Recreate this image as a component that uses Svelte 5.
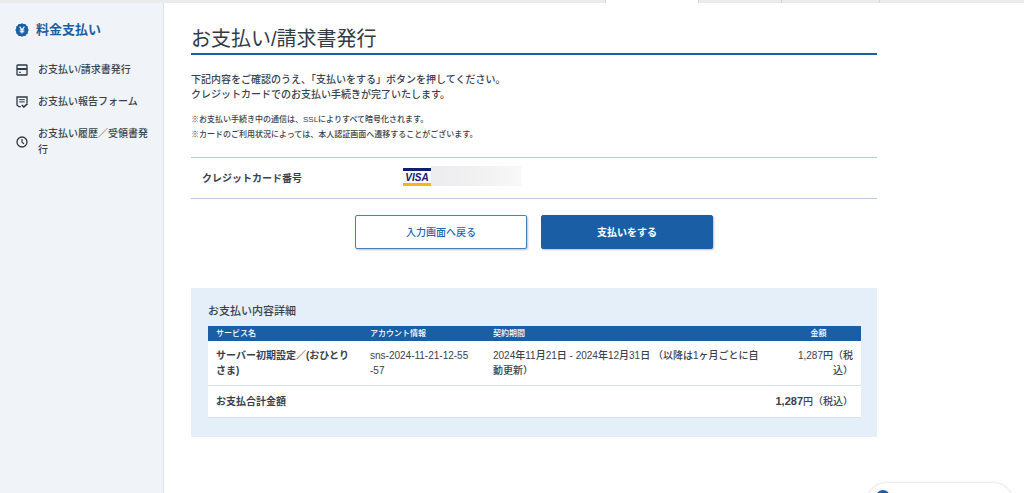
<script>
    const menus = [
        { icon: 'card', label: 'お支払い/請求書発行' },
        { icon: 'report', label: 'お支払い報告フォーム' },
        { icon: 'clock', label: 'お支払い履歴／受領書発行' },
    ];
    const notes = [
        '※お支払い手続き中の通信は、SSLによりすべて暗号化されます。',
        '※カードのご利用状況によっては、本人認証画面へ遷移することがございます。',
    ];
</script>

<div class="topbar">
    <span class="tab wide"></span>
    <span class="tab active"></span>
    <span class="tab"></span>
    <span class="tab mid"></span>
    <span class="tab last"></span>
</div>

<div class="layout">
    <nav class="sidebar">
        <h2>
            <svg width="14" height="14" viewBox="0 0 14 14">
                <path
                    d="M7 .3l1.600.7 1.800 0 .9 1.500 1.500.9V5.200l.9 1.800-.9 1.700v1.800l-1.500.900-.9 1.500-1.800 0L7 13.700l-1.600-.7-1.800 0-.9-1.500-1.500-.9V8.700L.3 7l.9-1.800V3.400l1.500-.9.9-1.500 1.800 0z"
                    fill="#1a5fa5"
                />
                <path d="M4.600 3.700L7 6.800l2.400-3.100M7 6.800v3.700M4.700 7h4.600M4.700 8.800h4.600" stroke="#fff" stroke-width="1.100" fill="none" />
            </svg>
            料金支払い
        </h2>
        <ul>
            {#each menus as menu}
                <li>
                    <a href="#{menu.icon}">
                        <svg width="12" height="12" viewBox="0 0 12 12" fill="none" stroke="#2f3740" stroke-width="1.3">
                            {#if menu.icon == 'card'}
                                <rect x="1" y="1" width="10" height="10" rx=".6" />
                                <path d="M1 5h10" stroke-width="2" />
                                <path d="M3 8.300h2" stroke-width="1" />
                            {:else if menu.icon == 'report'}
                                <path d="M4.800 10.700H2.800L1 8.900V1h10V7" />
                                <path d="M3.200 3.700h5.600M3.200 5.900h5.600" stroke-width="1" />
                                <path d="M5.800 9l2 2 3.700-3.500" stroke-width="1.600" />
                            {:else}
                                <circle cx="6" cy="6" r="5" />
                                <path d="M6 3v3.200l2 1.700" stroke-width="1.200" />
                            {/if}
                        </svg>
                        <span>{menu.label}</span>
                    </a>
                </li>
            {/each}
        </ul>
    </nav>

    <main>
        <h1>お支払い/請求書発行</h1>
        <p class="lead">
            下記内容をご確認のうえ、「支払いをする」ボタンを押してください。<br />
            クレジットカードでのお支払い手続きが完了いたします。
        </p>
        <div class="notes">
            {#each notes as note}
                <p>{note}</p>
            {/each}
        </div>

        <dl class="card-row">
            <dt>クレジットカード番号</dt>
            <dd>
                <svg width="28" height="18" viewBox="0 0 28 18">
                    <rect width="28" height="18" fill="#fff" />
                    <rect width="28" height="3" fill="#10206f" />
                    <rect y="15" width="28" height="3" fill="#f7b416" />
                    <text x="14" y="13" text-anchor="middle">VISA</text>
                </svg>
                <span class="masked"></span>
            </dd>
        </dl>

        <div class="buttons">
            <button type="button" class="back">入力画面へ戻る</button>
            <button type="submit" class="pay">支払いをする</button>
        </div>

        <section class="detail">
            <h3>お支払い内容詳細</h3>
            <table>
                <colgroup>
                    <col class="c-name" />
                    <col class="c-account" />
                    <col />
                    <col class="c-price" />
                </colgroup>
                <thead>
                    <tr>
                        <th>サービス名</th>
                        <th>アカウント情報</th>
                        <th>契約期間</th>
                        <th class="center">金額</th>
                    </tr>
                </thead>
                <tbody>
                    <tr>
                        <th>サーバー初期設定／(おひとりさま)</th>
                        <td>sns-2024-11-21-12-55<br />-57</td>
                        <td class="period">2024年11月21日 - 2024年12月31日 （以降は1ヶ月ごとに自動更新）</td>
                        <td class="price">1,287円（税込）</td>
                    </tr>
                    <tr class="total">
                        <th colspan="2">お支払合計金額</th>
                        <td class="price" colspan="2"><strong>1,287</strong>円（税込）</td>
                    </tr>
                </tbody>
            </table>
        </section>
    </main>
</div>

<button type="button" class="chat" aria-label="チャット"><span></span></button>

<style>
    :global(body) {
        margin: 0;
        background: #fff;
        color: #3a424c;
        font-family: 'Liberation Sans', 'Noto Sans CJK JP', sans-serif;
        font-size: 10px;
        font-weight: 500;
        line-height: 15px;
    }
    h1,
    h2,
    h3,
    p,
    ul,
    dl,
    dd {
        margin: 0;
        padding: 0;
    }
    .topbar {
        display: flex;
        height: 3px;
    }
    .tab {
        flex: 82;
        box-sizing: border-box;
        background: #ebebeb;
        border-right: 1px solid #d6d6d6;
    }
    .tab.wide {
        flex: 607;
    }
    .tab.active {
        flex: 93;
        background: #fff;
    }
    .tab.mid {
        flex: 97;
    }
    .tab.last {
        flex: 145;
        border: 0;
    }
    .layout {
        display: flex;
        min-height: calc(100vh - 3px);
    }
    .sidebar {
        box-sizing: border-box;
        flex: none;
        width: 164px;
        padding: 17px 14px 0 15px;
        background: #f0f4f8;
        border-right: 1px solid #dbe2e9;
    }
    .sidebar h2 {
        display: flex;
        align-items: center;
        gap: 7px;
        color: #1a5fa5;
        font-size: 13px;
        line-height: 20px;
    }
    .sidebar ul {
        display: flex;
        flex-direction: column;
        gap: 16px;
        margin-top: 22px;
        list-style: none;
    }
    .sidebar a {
        display: flex;
        align-items: center;
        gap: 10px;
        padding-left: 1px;
        color: inherit;
        line-height: 16px;
        text-decoration: none;
    }
    .sidebar svg {
        flex: none;
    }
    main {
        flex: 1;
        min-width: 0;
        padding: 22px 147px 56px 27px;
    }
    h1 {
        border-bottom: 2px solid #1a5fa5;
        color: #333b45;
        font-size: 20px;
        font-weight: 400;
        line-height: 28px;
    }
    .lead {
        margin-top: 17px;
    }
    .notes {
        margin-top: 10px;
        font-size: 8px;
    }
    .card-row {
        display: flex;
        align-items: center;
        height: 40px;
        margin-top: 15px;
        border-top: 1px solid #b9cee2;
        border-bottom: 1px solid #b9cee2;
    }
    .card-row dt {
        box-sizing: border-box;
        width: 212px;
        padding-left: 11px;
        font-weight: bold;
    }
    .card-row dd {
        display: flex;
        align-items: flex-end;
        align-self: flex-start;
        padding-top: 8px;
    }
    .card-row text {
        fill: #10206f;
        font-size: 10px;
        font-style: italic;
        font-weight: bold;
    }
    .masked {
        width: 90px;
        height: 20px;
        background: linear-gradient(90deg, #ececee, #f2f2f3 60%, #f8f8f8);
    }
    .buttons {
        display: flex;
        justify-content: center;
        gap: 14px;
        margin-top: 16px;
    }
    .buttons button {
        width: 172px;
        height: 34px;
        padding: 0;
        border: 1px solid #1a5fa5;
        border-radius: 2px;
        box-shadow: 1px 1px 2px #b4c3d2;
        font: inherit;
        cursor: pointer;
    }
    .buttons .back {
        border-color: #4a80ba;
        background: #fff;
        color: #2567aa;
    }
    .buttons .pay {
        background: #1a5fa5;
        color: #fff;
        font-weight: bold;
    }
    .detail {
        margin-top: 39px;
        padding: 16px 16px 19px 17px;
        background: #e4effa;
    }
    .detail h3 {
        margin-bottom: 7px;
        font-size: 11px;
        font-weight: 500;
    }
    table {
        width: 100%;
        table-layout: fixed;
        border-collapse: collapse;
        background: #fff;
    }
    .c-name {
        width: 154px;
    }
    .c-account {
        width: 123px;
    }
    .c-price {
        width: 85px;
    }
    th,
    td {
        padding: 7px 8px;
        text-align: left;
        vertical-align: top;
    }
    thead th {
        padding: 0 8px;
        background: #1a5fa5;
        color: #fff;
        font-size: 8px;
        font-weight: 500;
    }
    thead .center {
        text-align: center;
    }
    tbody tr {
        border-bottom: 1px solid #d5e2ee;
    }
    .total th,
    .total td {
        padding: 8px;
    }
    td.period {
        padding-right: 14px;
    }
    td.price {
        text-align: right;
    }
    strong {
        font-size: 11px;
    }
    .chat {
        display: flex;
        align-items: flex-start;
        position: fixed;
        right: 11px;
        bottom: -30px;
        width: 146px;
        height: 40px;
        padding: 7px 9px;
        border: 0;
        border-radius: 20px;
        background: #fff;
        box-shadow: 0 0 3px #d0d0d0;
    }
    .chat span {
        width: 14px;
        height: 14px;
        border-radius: 50%;
        background: #1a5fa5;
    }
</style>
